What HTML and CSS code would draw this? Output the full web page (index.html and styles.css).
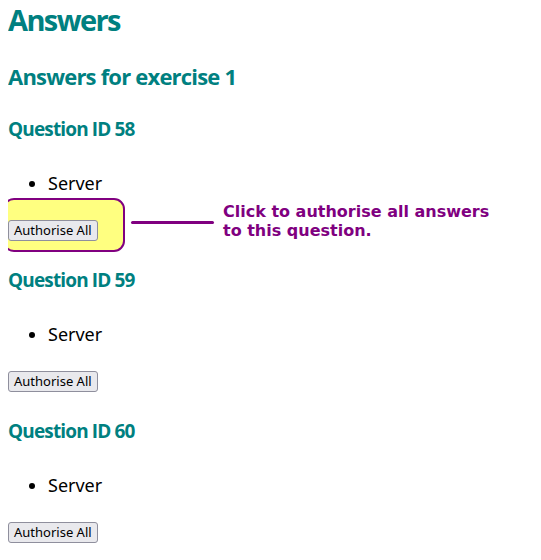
FILE: index.html
```html
<!DOCTYPE html>
<html>
<head>
<meta charset="utf-8">
<link rel="stylesheet" href="styles.css">
</head>
<body>
<h1 class="title">Answers</h1>
<h2 class="subtitle">Answers for exercise 1</h2>
<section class="question">
  <h3 class="qhead">Question ID 58</h3>
  <ul class="answers"><li>Server</li></ul>
  <div class="action">
    <button class="btn">Authorise All</button>
    <div class="callout">
      <div class="highlight"></div>
      <div class="connector"></div>
      <p class="note">Click to authorise all answers<br>to this question.</p>
    </div>
  </div>
</section>
<section class="question">
  <h3 class="qhead">Question ID 59</h3>
  <ul class="answers"><li>Server</li></ul>
  <div class="action"><button class="btn">Authorise All</button></div>
</section>
<section class="question">
  <h3 class="qhead">Question ID 60</h3>
  <ul class="answers"><li>Server</li></ul>
  <div class="action"><button class="btn">Authorise All</button></div>
</section>
</body>
</html>
```
FILE: styles.css
```css
html, body { background: #fff; }
body {
  margin: 0 8px;
  padding-top: 2px;
  font-family: "Noto Sans", sans-serif;
  color: #000;
}
.title, .subtitle, .qhead {
  font-family: "Open Sans", sans-serif;
  font-weight: 700;
  color: #008080;
}
.title {
  font-size: 29px;
  letter-spacing: -1.6px;
  line-height: 36px;
  margin: 0 0 24px;
}
.subtitle {
  font-size: 22px;
  letter-spacing: -0.8px;
  line-height: 28px;
  margin: 0 0 27px;
}
.qhead {
  font-size: 19px;
  letter-spacing: -0.85px;
  line-height: 24px;
  margin: 0 0 30px;
}
.question { margin-bottom: 29px; }
.answers {
  margin: 0 0 23px;
  padding-left: 40px;
  font-size: 18px;
  line-height: 24px;
}
.action { position: relative; height: 21px; }
.btn {
  font-family: "Noto Sans", sans-serif;
  font-size: 13px;
  height: 21px;
  padding: 0 5px;
  border: 1px solid #8f8f9d;
  border-radius: 3px;
  background: #e9e9ed;
  color: #000;
  position: relative;
  z-index: 2;
}
.callout { position: absolute; left: -5px; top: -20px; }
.highlight {
  position: absolute;
  left: 0; top: 0;
  width: 118px; height: 50px;
  border: 2px solid #800080;
  border-radius: 11px;
  background: #ffff80;
}
.connector {
  position: absolute;
  left: 128px; top: 23px;
  width: 83px; height: 3px;
  background: #800080;
  border-radius: 2px;
}
.note {
  position: absolute;
  left: 220px; top: 4px;
  margin: 0;
  width: 320px;
  font-family: "DejaVu Sans", sans-serif;
  font-weight: 700;
  font-size: 16px;
  line-height: 19px;
  color: #800080;
}
```
